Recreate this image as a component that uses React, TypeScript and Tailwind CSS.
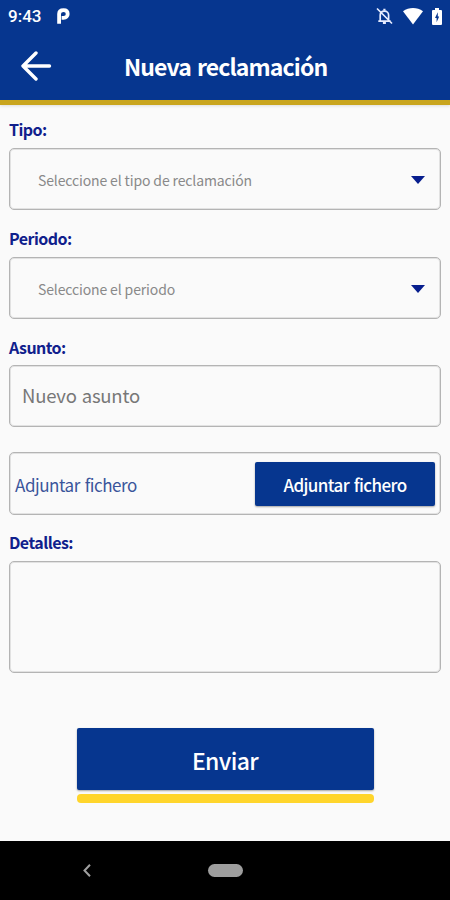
import type { ReactNode } from "react";

const sans = "font-['Noto_Sans_CJK_SC','Noto_Sans',sans-serif]";
const frame = "rounded-[5px] border border-[#b4b4b4] shadow-[inset_0_0_0_1px_#e2e2e2]";

function Label({ children, className }: { children: ReactNode; className: string }) {
  return (
    <div className={`flex h-6 items-center whitespace-nowrap text-[16px] font-bold leading-6 tracking-[-0.55px] text-[#10208c] ${className}`}>
      {children}
    </div>
  );
}

function SelectBox({ children, className }: { children: ReactNode; className: string }) {
  return (
    <button className={`flex h-[62px] w-full items-center justify-between pl-[28px] pr-[15px] text-[14px] tracking-[-0.13px] text-[#898989] ${frame} ${className}`}>
      <span className="mt-[3px]">{children}</span>
      <svg width="14" height="8" viewBox="0 0 14 8" className="mt-px">
        <path d="M0 0h14L7 8z" fill="#071e8e" />
      </svg>
    </button>
  );
}

function StatusBar() {
  return (
    <div className="flex h-8 items-center pl-2 pr-[8px] text-white">
      <span className="font-[Roboto,sans-serif] text-[17px] font-medium leading-5">9:43</span>
      <svg width="13" height="16" viewBox="0 0 13 16" className="ml-4">
        <path d="M2.1 15.8V6C2.1 3.5 3.8 2.2 6.6 2.2c2.6 0 4.1 1.4 4.1 3.7s-1.5 3.9-4.1 3.9H4.6" fill="none" stroke="white" strokeWidth="3.8" />
      </svg>
      <div className="ml-auto flex items-center">
        <svg width="17" height="18" viewBox="0 0 17 18" fill="none" stroke="#e7ecff" strokeWidth="1.7">
          <path d="M4.2 14V8.2c0-2.5 1.6-4 4.2-4s4.2 1.5 4.2 4V14M2.3 14.1h12.4M1 1.5l15 15" />
          <path d="M8.4 1.7v2M6.9 15.9h3" strokeWidth="2.2" />
        </svg>
        <svg width="20" height="17" viewBox="0 0 20 17" className="ml-[10px]">
          <path d="M0 3.3C6-1 14-1 20 3.3L10 16.5z" fill="white" />
        </svg>
        <svg width="10" height="17" viewBox="0 0 10 17" className="ml-[9px]">
          <path d="M3 0h4v2h2q1 0 1 1v13q0 1-1 1H1q-1 0-1-1V3q0-1 1-1h2zM5.8 4.2L3 10h1.6v4.2L7.2 8.5H5.8z" fill="white" fillRule="evenodd" />
        </svg>
      </div>
    </div>
  );
}

export default function App() {
  return (
    <div className={`flex h-[900px] w-[450px] flex-col overflow-hidden bg-[#fafafa] ${sans}`}>
      <header className="h-[105px] shrink-0 border-b-[5px] border-[#c9a51e] bg-[#06368f] shadow-[0_1px_3px_rgba(0,0,0,0.12)]">
        <StatusBar />
        <div className="flex h-[68px] items-center pl-[21px]">
          <svg width="31" height="30" viewBox="0 0 31 30" fill="none" stroke="white" strokeWidth="3.4" strokeLinecap="round" strokeLinejoin="round" className="shrink-0">
            <path d="M28.5 15H2M15 2L2 15l13 13" />
          </svg>
          <h1 className="ml-[72px] whitespace-nowrap text-[23px] font-bold leading-8 tracking-[-0.88px] text-white [word-spacing:1.5px]">Nueva reclamación</h1>
        </div>
      </header>
      <main className="flex flex-1 flex-col pl-[9px] pr-[9px]">
        <Label className="mt-[12px]">Tipo:</Label>
        <SelectBox className="mt-[7px]">Seleccione el tipo de reclamación</SelectBox>
        <Label className="mt-[16px]">Periodo:</Label>
        <SelectBox className="mt-[7px]">Seleccione el periodo</SelectBox>
        <Label className="mt-[16px]">Asunto:</Label>
        <input aria-label="Asunto" placeholder="Nuevo asunto" className={`mt-[6px] h-[62px] px-3 pb-[2px] text-[18.5px] tracking-[-0.2px] [word-spacing:1px] placeholder:text-[#777777] ${frame}`} />
        <div className={`mt-[25px] flex h-[63px] items-center justify-between px-[5px] ${frame}`}>
          <span className="mt-[2px] text-[17px] tracking-[-0.45px] text-[#3a559b] [word-spacing:1.5px]">Adjuntar fichero</span>
          <button className="h-[44px] w-[180px] rounded-[2px] bg-[#06368f] pt-[2px] text-[17px] font-medium tracking-[-0.6px] text-white shadow-[0_1px_2px_rgba(0,0,0,0.35)] [word-spacing:1.5px]">Adjuntar fichero</button>
        </div>
        <Label className="mt-[15px]">Detalles:</Label>
        <textarea aria-label="Detalles" className={`mt-[7px] h-[112px] shrink-0 resize-none ${frame}`} />
        <button className="mx-auto mt-[55px] h-[62px] w-[297px] shrink-0 rounded-[2px] bg-[#06368f] pt-[3px] text-[23px] font-medium tracking-[-0.65px] text-white shadow-[0_1px_2px_rgba(0,0,0,0.35)]">Enviar</button>
        <div className="mx-auto mt-[4px] h-[9px] w-[297px] shrink-0 rounded-[4px] bg-[#ffd52b]" />
      </main>
      <nav className="flex h-[59px] shrink-0 items-center bg-black pl-[83px]">
        <svg width="8" height="13" viewBox="0 0 8 13" fill="none" stroke="#a0a0a0" strokeWidth="2">
          <path d="M7 .8L1.5 6.5 7 12.2" />
        </svg>
        <div className="ml-[117px] h-[13px] w-[35px] rounded-full bg-[#9e9e9e]" />
      </nav>
    </div>
  );
}
